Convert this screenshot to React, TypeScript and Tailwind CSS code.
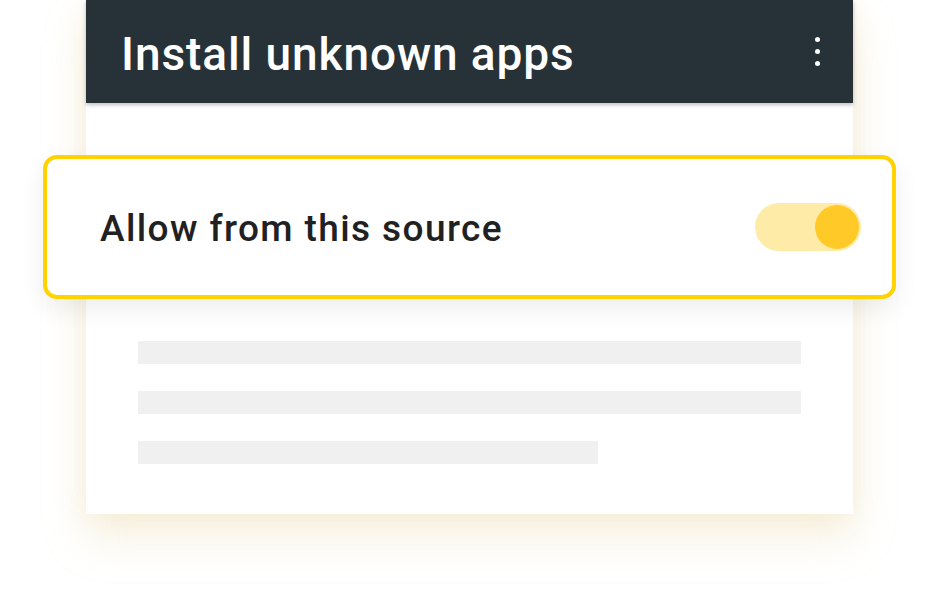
export default function App() {
  return (
    <div className="w-[940px] h-[592px] bg-white overflow-hidden font-['Roboto',sans-serif]">
      <div className="ml-[86px] w-[767px] h-[514px] bg-white shadow-[0_24px_40px_rgba(225,205,140,0.28),0_0_24px_rgba(225,205,140,0.18)] flex flex-col">
        <div className="h-[103px] bg-[#263238] flex items-center justify-between pl-[35px] pr-[33px] shadow-[0_2px_4px_rgba(0,0,0,0.25)] relative z-10">
          <h1 className="text-white text-[46px] font-medium leading-none tracking-[0.9px] mt-[4px]">Install unknown apps</h1>
          <div className="flex flex-col gap-[7px] items-center w-[6px]">
            <span className="w-[5px] h-[5px] rounded-full bg-white" />
            <span className="w-[5px] h-[5px] rounded-full bg-white" />
            <span className="w-[5px] h-[5px] rounded-full bg-white" />
          </div>
        </div>
        <div className="mt-[52px] -mx-[43px] h-[144px] border-4 border-[#FFD200] rounded-[14px] bg-white flex items-center justify-between pl-[53px] pr-[31px] shadow-[0_10px_24px_rgba(0,0,0,0.07)] relative z-10">
          <span className="text-[#212121] text-[37px] font-medium leading-none tracking-[1.4px] mt-[2px]">Allow from this source</span>
          <div className="w-[106px] h-[48px] rounded-full bg-[#FFEBA8] flex items-center justify-end pr-[2px]">
            <span className="w-[44px] h-[44px] rounded-full bg-[#FFCA28]" />
          </div>
        </div>
        <div className="mt-[42px] pl-[52px] flex flex-col gap-[27px]">
          <div className="w-[663px] h-[23px] bg-[#F0F0F0]" />
          <div className="w-[663px] h-[23px] bg-[#F0F0F0]" />
          <div className="w-[460px] h-[23px] bg-[#F0F0F0]" />
        </div>
      </div>
    </div>
  );
}
